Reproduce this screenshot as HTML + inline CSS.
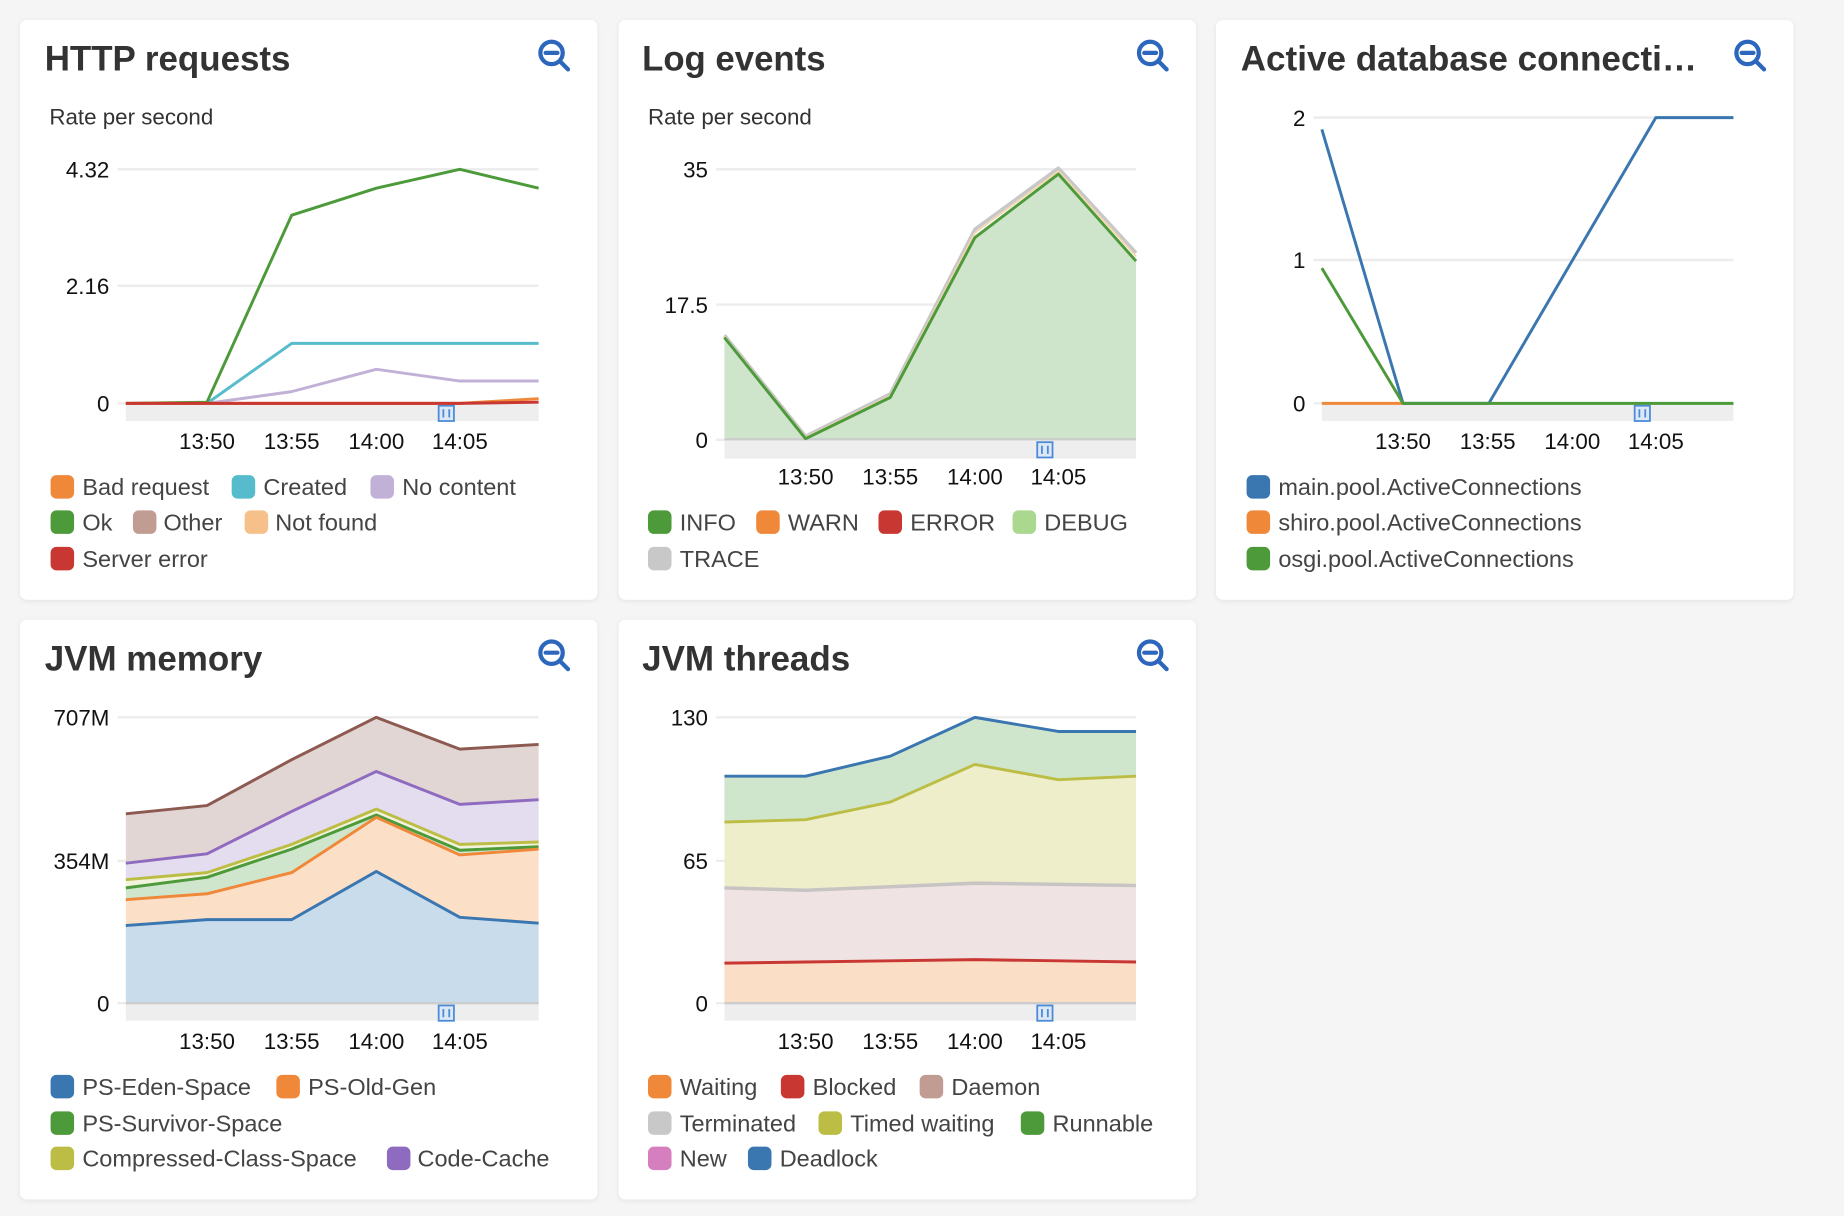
<!DOCTYPE html>
<html><head><meta charset="utf-8"><style>
html,body{margin:0;padding:0;background:#f5f5f5;width:1844px;height:1216px;overflow:hidden}
svg{display:block}
text{font-family:"Liberation Sans",sans-serif}
.t{font-size:30px;font-weight:bold;fill:#333}
.s{font-size:19px;fill:#333}
.a{font-size:19px;fill:#111}
.l{font-size:20px;fill:#444}
.g{stroke:#ececec;stroke-width:2}
</style></head><body>
<svg width="1844" height="1216" viewBox="0 0 1568 1034" xmlns="http://www.w3.org/2000/svg">
<defs>
<filter id="sh" x="-5%" y="-5%" width="110%" height="110%"><feDropShadow dx="0" dy="1" stdDeviation="2" flood-color="#000" flood-opacity="0.08"/></filter>
<g id="zi" fill="none" stroke="#2c67bd" stroke-width="3.6" stroke-linecap="round"><circle cx="469" cy="45" r="9.5"/><line x1="464" y1="45" x2="474" y2="45"/><line x1="476" y1="52" x2="483" y2="59"/></g>
<g id="bi"><rect x="373" y="345" width="13" height="13" fill="#dde8f6" stroke="#4a8ad8" stroke-width="1.5"/><line x1="377" y1="348" x2="377" y2="355" stroke="#4a8ad8" stroke-width="1.5"/><line x1="382" y1="348" x2="382" y2="355" stroke="#4a8ad8" stroke-width="1.5"/></g>
</defs>
<rect width="1568" height="1034" fill="#f5f5f5"/>
<g filter="url(#sh)" fill="#fff">
<rect x="17" y="17" width="491" height="493" rx="6"/>
<rect x="526" y="17" width="491" height="493" rx="6"/>
<rect x="1034" y="17" width="491" height="493" rx="6"/>
<rect x="17" y="527" width="491" height="493" rx="6"/>
<rect x="526" y="527" width="491" height="493" rx="6"/>
</g>

<!-- Card 1 -->
<text class="t" x="38" y="60" textLength="209" lengthAdjust="spacingAndGlyphs">HTTP requests</text>
<use href="#zi"/>
<text class="s" x="42" y="106">Rate per second</text>
<line class="g" x1="100" y1="144" x2="458" y2="144"/><line class="g" x1="100" y1="243" x2="458" y2="243"/><line class="g" x1="100" y1="343" x2="458" y2="343"/>
<text class="a" x="93" y="151" text-anchor="end">4.32</text><text class="a" x="93" y="250" text-anchor="end">2.16</text><text class="a" x="93" y="350" text-anchor="end">0</text>
<rect x="107" y="344" width="351" height="14" fill="#eee"/>
<use href="#bi"/>
<g fill="none" stroke-width="2.5" stroke-linejoin="round">
<polyline stroke="#c2b1d6" points="176,343 248,333 320,314 391,324 458,324"/>
<polyline stroke="#56bccb" points="176,343 248,292 458,292"/>
<polyline stroke="#4d9a3a" points="107,343 176,342 248,183 320,160 391,144 458,160"/>
<polyline stroke="#f0883a" points="107,343 391,343 458,339"/>
<polyline stroke="#c83732" points="107,343 391,343 458,342"/>
</g>
<g class="a" text-anchor="middle"><text x="176" y="382">13:50</text><text x="248" y="382">13:55</text><text x="320" y="382">14:00</text><text x="391" y="382">14:05</text></g>
<rect x="43" y="404" width="20" height="20" rx="5" fill="#f0883a"/><text class="l" x="70" y="421">Bad request</text>
<rect x="197" y="404" width="20" height="20" rx="5" fill="#56bccb"/><text class="l" x="224" y="421">Created</text>
<rect x="315" y="404" width="20" height="20" rx="5" fill="#c2b1d6"/><text class="l" x="342" y="421">No content</text>
<rect x="43" y="434" width="20" height="20" rx="5" fill="#4d9a3a"/><text class="l" x="70" y="451">Ok</text>
<rect x="113" y="434" width="20" height="20" rx="5" fill="#c09c93"/><text class="l" x="139" y="451">Other</text>
<rect x="208" y="434" width="20" height="20" rx="5" fill="#f6c08a"/><text class="l" x="234" y="451">Not found</text>
<rect x="43" y="465" width="20" height="20" rx="5" fill="#c83732"/><text class="l" x="70" y="482">Server error</text>

<!-- Card 2 -->
<text class="t" x="546" y="60" textLength="156" lengthAdjust="spacingAndGlyphs">Log events</text>
<use href="#zi" x="509"/>
<text class="s" x="551" y="106">Rate per second</text>
<line class="g" x1="609" y1="144" x2="966" y2="144"/><line class="g" x1="609" y1="259" x2="966" y2="259"/><line class="g" x1="609" y1="374" x2="966" y2="374"/>
<text class="a" x="602" y="151" text-anchor="end">35</text><text class="a" x="602" y="266" text-anchor="end">17.5</text><text class="a" x="602" y="381" text-anchor="end">0</text>
<rect x="616" y="375" width="350" height="15" fill="#eee"/>
<use href="#bi" x="509" y="31"/>
<polygon fill="#cfe5cb" points="616,287 685,373 757,338 829,202 900,148 966,222 966,374 616,374"/>
<line x1="616" y1="373.5" x2="966" y2="373.5" stroke="#ccc" stroke-width="2"/>
<g fill="none" stroke-linejoin="round">
<polyline stroke="#c8c8c8" stroke-width="3" points="616,285 685,371 757,335 829,195 900,143 966,215"/>
<polyline stroke="#f6d7b0" stroke-width="1.5" points="616,286 685,372 757,336.5 829,198 900,145.5 966,218"/>
<polyline stroke="#4d9a3a" stroke-width="2.5" points="616,287 685,373 757,338 829,202 900,148 966,222"/>
</g>
<g class="a" text-anchor="middle"><text x="685" y="412">13:50</text><text x="757" y="412">13:55</text><text x="829" y="412">14:00</text><text x="900" y="412">14:05</text></g>
<rect x="551" y="434" width="20" height="20" rx="5" fill="#4d9a3a"/><text class="l" x="578" y="451">INFO</text>
<rect x="643" y="434" width="20" height="20" rx="5" fill="#f0883a"/><text class="l" x="670" y="451">WARN</text>
<rect x="747" y="434" width="20" height="20" rx="5" fill="#c83732"/><text class="l" x="774" y="451">ERROR</text>
<rect x="861" y="434" width="20" height="20" rx="5" fill="#a9d88e"/><text class="l" x="888" y="451">DEBUG</text>
<rect x="551" y="465" width="20" height="20" rx="5" fill="#c8c8c8"/><text class="l" x="578" y="482">TRACE</text>

<!-- Card 3 -->
<text class="t" x="1055" y="60" textLength="388" lengthAdjust="spacingAndGlyphs">Active database connecti…</text>
<use href="#zi" x="1017"/>
<line class="g" x1="1117" y1="100" x2="1474" y2="100"/><line class="g" x1="1117" y1="221" x2="1474" y2="221"/><line class="g" x1="1117" y1="343" x2="1474" y2="343"/>
<text class="a" x="1110" y="107" text-anchor="end">2</text><text class="a" x="1110" y="228" text-anchor="end">1</text><text class="a" x="1110" y="350" text-anchor="end">0</text>
<rect x="1124" y="344" width="350" height="14" fill="#eee"/>
<use href="#bi" x="1017"/>
<g fill="none" stroke-width="2.5" stroke-linejoin="round">
<polyline stroke="#3a76b0" points="1124,110 1193,343 1266,343 1408,100 1474,100"/>
<polyline stroke="#f0883a" points="1124,343 1193,343"/>
<polyline stroke="#4d9a3a" points="1124,228 1193,343 1474,343"/>
</g>
<g class="a" text-anchor="middle"><text x="1193" y="382">13:50</text><text x="1265" y="382">13:55</text><text x="1337" y="382">14:00</text><text x="1408" y="382">14:05</text></g>
<rect x="1060" y="404" width="20" height="20" rx="5" fill="#3a76b0"/><text class="l" x="1087" y="421">main.pool.ActiveConnections</text>
<rect x="1060" y="434" width="20" height="20" rx="5" fill="#f0883a"/><text class="l" x="1087" y="451">shiro.pool.ActiveConnections</text>
<rect x="1060" y="465" width="20" height="20" rx="5" fill="#4d9a3a"/><text class="l" x="1087" y="482">osgi.pool.ActiveConnections</text>

<!-- Card 4 -->
<text class="t" x="38" y="570" textLength="185" lengthAdjust="spacingAndGlyphs">JVM memory</text>
<use href="#zi" y="510"/>
<line class="g" x1="100" y1="610" x2="458" y2="610"/><line class="g" x1="100" y1="732" x2="458" y2="732"/><line class="g" x1="100" y1="853" x2="458" y2="853"/>
<text class="a" x="93" y="617" text-anchor="end">707M</text><text class="a" x="93" y="739" text-anchor="end">354M</text><text class="a" x="93" y="860" text-anchor="end">0</text>
<rect x="107" y="854" width="351" height="14" fill="#eee"/>
<use href="#bi" y="510"/>
<polygon fill="#e2d6d4" points="107,692 176,685 248,646 320,610 391,637 458,633 458,680 391,684 320,656 248,690 176,726 107,734"/>
<polygon fill="#e4dcef" points="107,734 176,726 248,690 320,656 391,684 458,680 458,716 391,718 320,688 248,718 176,742 107,748"/>
<polygon fill="#f2f3dc" points="107,748 176,742 248,718 320,688 391,718 458,716 458,720 391,723 320,693 248,722 176,746 107,755"/>
<polygon fill="#d0e6cc" points="107,755 176,746 248,722 320,693 391,723 458,720 458,722 391,727 320,695 248,742 176,760 107,765"/>
<polygon fill="#fbdfc6" points="107,765 176,760 248,742 320,695 391,727 458,722 458,785 391,780 320,741 248,782 176,782 107,787"/>
<polygon fill="#c9dcec" points="107,787 176,782 248,782 320,741 391,780 458,785 458,853 107,853"/>
<line x1="107" y1="853" x2="458" y2="853" stroke="#ccc" stroke-width="2"/>
<g fill="none" stroke-width="2.5" stroke-linejoin="round">
<polyline stroke="#8c5a50" points="107,692 176,685 248,646 320,610 391,637 458,633"/>
<polyline stroke="#8e6bbf" points="107,734 176,726 248,690 320,656 391,684 458,680"/>
<polyline stroke="#bcbd45" points="107,748 176,742 248,718 320,688 391,718 458,716"/>
<polyline stroke="#4d9a3a" points="107,755 176,746 248,722 320,693 391,723 458,720"/>
<polyline stroke="#f0883a" points="107,765 176,760 248,742 320,695 391,727 458,722"/>
<polyline stroke="#3a76b0" points="107,787 176,782 248,782 320,741 391,780 458,785"/>
</g>
<g class="a" text-anchor="middle"><text x="176" y="892">13:50</text><text x="248" y="892">13:55</text><text x="320" y="892">14:00</text><text x="391" y="892">14:05</text></g>
<rect x="43" y="914" width="20" height="20" rx="5" fill="#3a76b0"/><text class="l" x="70" y="931">PS-Eden-Space</text>
<rect x="235" y="914" width="20" height="20" rx="5" fill="#f0883a"/><text class="l" x="262" y="931">PS-Old-Gen</text>
<rect x="43" y="945" width="20" height="20" rx="5" fill="#4d9a3a"/><text class="l" x="70" y="962">PS-Survivor-Space</text>
<rect x="43" y="975" width="20" height="20" rx="5" fill="#bcbd45"/><text class="l" x="70" y="992">Compressed-Class-Space</text>
<rect x="329" y="975" width="20" height="20" rx="5" fill="#8e6bbf"/><text class="l" x="355" y="992">Code-Cache</text>

<!-- Card 5 -->
<text class="t" x="546" y="570" textLength="177" lengthAdjust="spacingAndGlyphs">JVM threads</text>
<use href="#zi" x="509" y="510"/>
<line class="g" x1="609" y1="610" x2="966" y2="610"/><line class="g" x1="609" y1="732" x2="966" y2="732"/><line class="g" x1="609" y1="853" x2="966" y2="853"/>
<text class="a" x="602" y="617" text-anchor="end">130</text><text class="a" x="602" y="739" text-anchor="end">65</text><text class="a" x="602" y="860" text-anchor="end">0</text>
<rect x="616" y="854" width="350" height="14" fill="#eee"/>
<use href="#bi" x="509" y="510"/>
<polygon fill="#d0e6cc" points="616,660 685,660 757,643 829,610 900,622 966,622 966,660 900,663 829,650 757,682 685,697 616,699"/>
<polygon fill="#eeeecb" points="616,699 685,697 757,682 829,650 900,663 966,660 966,753 900,752 829,751 757,754 685,757 616,755"/>
<polygon fill="#efe4e3" points="616,755 685,757 757,754 829,751 900,752 966,753 966,818 900,817 829,816 757,817 685,818 616,819"/>
<polygon fill="#fadfc6" points="616,819 685,818 757,817 829,816 900,817 966,818 966,853 616,853"/>
<line x1="616" y1="853" x2="966" y2="853" stroke="#ccc" stroke-width="2"/>
<g fill="none" stroke-width="2.5" stroke-linejoin="round">
<polyline stroke="#c8c4c4" stroke-width="3" points="616,755 685,757 757,754 829,751 900,752 966,753"/>
<polyline stroke="#c83732" points="616,819 685,818 757,817 829,816 900,817 966,818"/>
<polyline stroke="#bcbd45" points="616,699 685,697 757,682 829,650 900,663 966,660"/>
<polyline stroke="#3a76b0" points="616,660 685,660 757,643 829,610 900,622 966,622"/>
</g>
<g class="a" text-anchor="middle"><text x="685" y="892">13:50</text><text x="757" y="892">13:55</text><text x="829" y="892">14:00</text><text x="900" y="892">14:05</text></g>
<rect x="551" y="914" width="20" height="20" rx="5" fill="#f0883a"/><text class="l" x="578" y="931">Waiting</text>
<rect x="664" y="914" width="20" height="20" rx="5" fill="#c83732"/><text class="l" x="691" y="931">Blocked</text>
<rect x="782" y="914" width="20" height="20" rx="5" fill="#c09c93"/><text class="l" x="809" y="931">Daemon</text>
<rect x="551" y="945" width="20" height="20" rx="5" fill="#c8c8c8"/><text class="l" x="578" y="962">Terminated</text>
<rect x="696" y="945" width="20" height="20" rx="5" fill="#bcbd45"/><text class="l" x="723" y="962">Timed waiting</text>
<rect x="868" y="945" width="20" height="20" rx="5" fill="#4d9a3a"/><text class="l" x="895" y="962">Runnable</text>
<rect x="551" y="975" width="20" height="20" rx="5" fill="#d67fbf"/><text class="l" x="578" y="992">New</text>
<rect x="636" y="975" width="20" height="20" rx="5" fill="#3a76b0"/><text class="l" x="663" y="992">Deadlock</text>
</svg>
</body></html>
